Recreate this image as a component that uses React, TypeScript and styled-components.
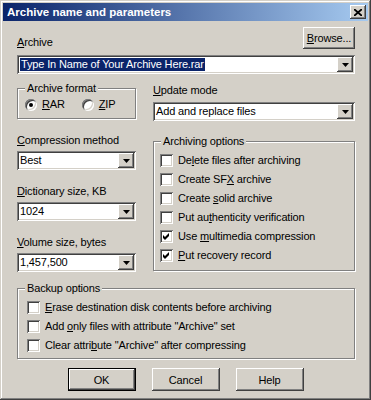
import React from 'react'
import styled, { createGlobalStyle } from 'styled-components'

const face = '#d4d0c8'
const shadow = '#808080'
const dark = '#404040'
const navy = '#0a246a'

const GlobalStyle = createGlobalStyle`
  html, body {
    margin: 0;
    padding: 0;
    background: ${face};
  }
  body {
    font-family: "Liberation Sans", Arial, sans-serif;
    font-size: 11px;
    letter-spacing: -0.15px;
    color: #000;
  }
`

const raised = `
  box-shadow: inset -1px -1px ${dark}, inset 1px 1px #fff, inset -2px -2px ${shadow}, inset 2px 2px ${face};
`

const sunken = `
  box-shadow: inset 1px 1px ${shadow}, inset -1px -1px #fff, inset 2px 2px ${dark}, inset -2px -2px ${face};
`

const Window = styled.div`
  width: 371px;
  height: 400px;
  box-sizing: border-box;
  padding: 3px;
  background: ${face};
  box-shadow: inset -1px -1px ${dark}, inset 1px 1px ${face}, inset -2px -2px ${shadow}, inset 2px 2px #fff;
  display: flex;
  flex-direction: column;
`

const TitleBar = styled.div`
  height: 18px;
  display: flex;
  align-items: center;
  padding: 0 2px;
  background: linear-gradient(to right, ${navy}, #a6caf0);
`

const Title = styled.div`
  color: #fff;
  font-weight: bold;
  font-size: 11.5px;
  letter-spacing: 0;
  padding-left: 2px;
  flex: 1;
`

const CloseButton = styled.div`
  width: 16px;
  height: 14px;
  background: ${face};
  ${raised}
  display: flex;
  align-items: center;
  justify-content: center;
`

const Body = styled.div`
  padding: 6px 13px 0 14px;
  display: flex;
  flex-direction: column;
`

const TopRow = styled.div`
  display: flex;
  justify-content: space-between;
  align-items: flex-end;
`

const Label = styled.div<{ $top?: number }>`
  line-height: 13px;
  margin-top: ${(p) => p.$top ?? 0}px;
  white-space: nowrap;
`

const Button = styled.div<{ $w: number; $h: number; $default?: boolean }>`
  width: ${(p) => p.$w}px;
  height: ${(p) => p.$h}px;
  box-sizing: border-box;
  background: ${face};
  display: flex;
  align-items: center;
  justify-content: center;
  ${(p) =>
    p.$default
      ? `border: 1px solid #000; box-shadow: inset -1px -1px ${dark}, inset 1px 1px #fff, inset -2px -2px ${shadow};`
      : raised}
`

const ComboField = styled.div<{ $top?: number }>`
  height: 19px;
  box-sizing: border-box;
  padding: 2px;
  margin-top: ${(p) => p.$top ?? 0}px;
  background: #fff;
  ${sunken}
  display: flex;
`

const ComboValue = styled.div`
  flex: 1;
  padding-left: 1px;
  line-height: 15px;
  white-space: nowrap;
  overflow: hidden;
`

const Selection = styled.span`
  display: inline-block;
  line-height: 13px;
  margin-top: 1px;
  padding: 0 1px;
  background: ${navy};
  color: #fff;
`

const DropButton = styled.div`
  width: 16px;
  height: 15px;
  background: ${face};
  ${raised}
  display: flex;
  align-items: center;
  justify-content: center;
`

const Columns = styled.div`
  display: grid;
  grid-template-columns: 119px 1fr;
  column-gap: 17px;
  margin-top: 10px;
`

const Column = styled.div`
  display: flex;
  flex-direction: column;
`

const Group = styled.div<{ $top?: number; $pad: string }>`
  position: relative;
  margin-top: ${(p) => p.$top ?? 0}px;
  padding: ${(p) => p.$pad};
  border: 1px solid ${shadow};
  box-shadow: inset 1px 1px #fff, 1px 1px #fff;
`

const Legend = styled.div`
  position: absolute;
  top: -7px;
  left: 7px;
  padding: 0 2px;
  line-height: 13px;
  background: ${face};
  white-space: nowrap;
`

const RadioRow = styled.div`
  display: flex;
  gap: 17px;
  line-height: 13px;
`

const Option = styled.div`
  display: flex;
  align-items: center;
  gap: 5px;
  height: 13px;
  white-space: nowrap;
`

const RadioCircle = styled.span<{ $checked?: boolean }>`
  width: 12px;
  height: 12px;
  border-radius: 50%;
  background: #fff;
  box-shadow: inset 1px 1px ${shadow}, inset -1px -1px #fff, inset 2px 2px ${dark}, inset -2px -2px ${face};
  display: flex;
  align-items: center;
  justify-content: center;

  &::after {
    content: '';
    width: 4px;
    height: 4px;
    border-radius: 50%;
    background: ${(p) => (p.$checked ? '#000' : 'transparent')};
  }
`

const CheckList = styled.div`
  display: flex;
  flex-direction: column;
`

const CheckRow = styled.div`
  height: 19px;
  display: flex;
  align-items: center;
  gap: 5px;
  line-height: 13px;
  white-space: nowrap;
`

const CheckBox = styled.span`
  width: 13px;
  height: 13px;
  flex: none;
  background: #fff;
  ${sunken}
  display: flex;
  align-items: center;
  justify-content: center;
`

const ButtonRow = styled.div`
  display: flex;
  justify-content: center;
  gap: 16px;
  margin-top: 9px;
  padding-right: 1px;
`

const Arrow = () => (
  <svg width="7" height="4" viewBox="0 0 7 4">
    <polygon points="0,0 7,0 3.5,4" fill="#000" />
  </svg>
)

const Check = () => (
  <svg width="7" height="7" viewBox="0 0 7 7">
    <path d="M0 2 L2 4 L6 0 L6 3 L2 7 L0 5 Z" fill="#000" />
  </svg>
)

const Combo = ({ value, selected, top }: { value: string; selected?: boolean; top?: number }) => (
  <ComboField $top={top}>
    <ComboValue>{selected ? <Selection>{value}</Selection> : value}</ComboValue>
    <DropButton>
      <Arrow />
    </DropButton>
  </ComboField>
)

const Checkbox = ({ checked, children }: { checked?: boolean; children: React.ReactNode }) => (
  <CheckRow>
    <CheckBox>{checked && <Check />}</CheckBox>
    <span>{children}</span>
  </CheckRow>
)

export default function App() {
  return (
    <>
      <GlobalStyle />
      <Window>
        <TitleBar>
          <Title>Archive name and parameters</Title>
          <CloseButton>
            <svg width="8" height="7" viewBox="0 0 8 7">
              <path d="M0 0 L8 7 M8 0 L0 7" stroke="#000" strokeWidth="1.8" />
            </svg>
          </CloseButton>
        </TitleBar>
        <Body>
          <TopRow>
            <Label>
              <u>A</u>rchive
            </Label>
            <Button $w={52} $h={22}>
              <span>
                <u>B</u>rowse...
              </span>
            </Button>
          </TopRow>
          <Combo value="Type In Name of Your Archive Here.rar" selected top={6} />

          <Columns>
            <Column>
              <Group $top={4} $pad="9px 0 7px 7px">
                <Legend>Archive format</Legend>
                <RadioRow>
                  <Option>
                    <RadioCircle $checked />
                    <span>
                      <u>R</u>AR
                    </span>
                  </Option>
                  <Option>
                    <RadioCircle />
                    <span>
                      <u>Z</u>IP
                    </span>
                  </Option>
                </RadioRow>
              </Group>

              <Label $top={15}>
                <u>C</u>ompression method
              </Label>
              <Combo value="Best" top={4} />
              <Label $top={15}>
                <u>D</u>ictionary size, KB
              </Label>
              <Combo value="1024" top={4} />
              <Label $top={15}>
                <u>V</u>olume size, bytes
              </Label>
              <Combo value="1,457,500" top={4} />
            </Column>

            <Column>
              <Label>
                <u>U</u>pdate mode
              </Label>
              <Combo value="Add and replace files" top={5} />
              <Group $top={20} $pad="9px 0 5px 6px">
                <Legend>Archiving options</Legend>
                <CheckList>
                  <Checkbox>
                    De<u>l</u>ete files after archiving
                  </Checkbox>
                  <Checkbox>
                    Create SF<u>X</u> archive
                  </Checkbox>
                  <Checkbox>
                    Create <u>s</u>olid archive
                  </Checkbox>
                  <Checkbox>
                    Put au<u>t</u>henticity verification
                  </Checkbox>
                  <Checkbox checked>
                    Use <u>m</u>ultimedia compression
                  </Checkbox>
                  <Checkbox checked>
                    <u>P</u>ut recovery record
                  </Checkbox>
                </CheckList>
              </Group>
            </Column>
          </Columns>

          <Group $top={16} $pad="9px 0 3px 9px">
            <Legend>Backup options</Legend>
            <CheckList>
              <Checkbox>
                <u>E</u>rase destination disk contents before archiving
              </Checkbox>
              <Checkbox>
                Add <u>o</u>nly files with attribute "Archive" set
              </Checkbox>
              <Checkbox>
                Clear attri<u>b</u>ute "Archive" after compressing
              </Checkbox>
            </CheckList>
          </Group>

          <ButtonRow>
            <Button $w={68} $h={23} $default>
              OK
            </Button>
            <Button $w={68} $h={23}>
              Cancel
            </Button>
            <Button $w={68} $h={23}>
              Help
            </Button>
          </ButtonRow>
        </Body>
      </Window>
    </>
  )
}
